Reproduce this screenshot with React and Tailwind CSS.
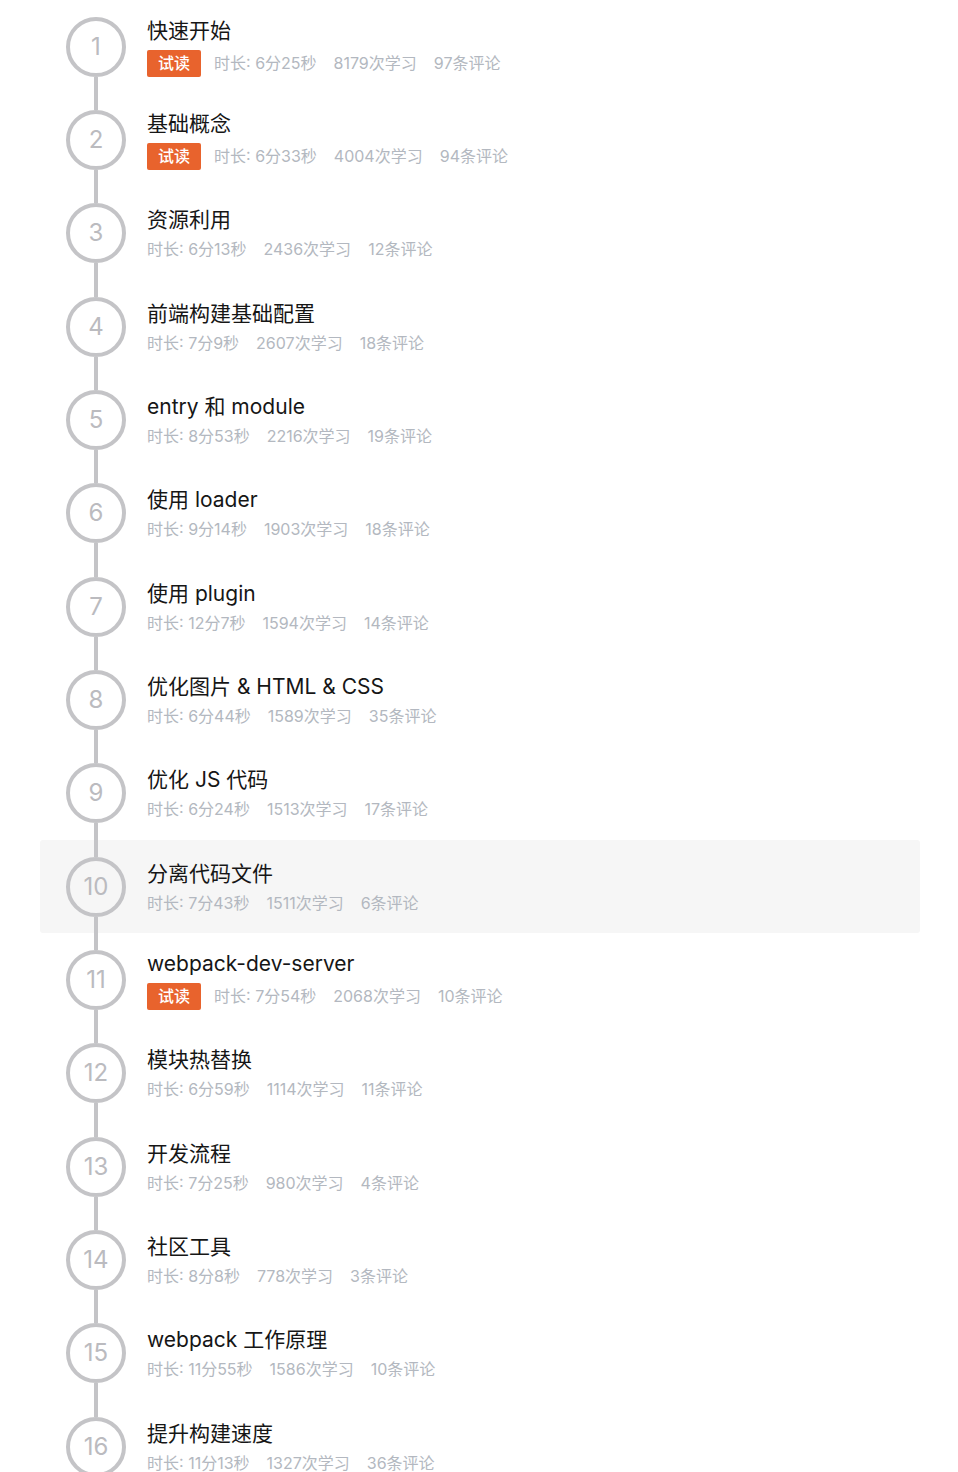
import React from "react";

const items = [
  ["快速开始", true, "6分25秒", "8179", "97"],
  ["基础概念", true, "6分33秒", "4004", "94"],
  ["资源利用", false, "6分13秒", "2436", "12"],
  ["前端构建基础配置", false, "7分9秒", "2607", "18"],
  ["entry 和 module", false, "8分53秒", "2216", "19"],
  ["使用 loader", false, "9分14秒", "1903", "18"],
  ["使用 plugin", false, "12分7秒", "1594", "14"],
  ["优化图片 & HTML & CSS", false, "6分44秒", "1589", "35"],
  ["优化 JS 代码", false, "6分24秒", "1513", "17"],
  ["分离代码文件", false, "7分43秒", "1511", "6"],
  ["webpack-dev-server", true, "7分54秒", "2068", "10"],
  ["模块热替换", false, "6分59秒", "1114", "11"],
  ["开发流程", false, "7分25秒", "980", "4"],
  ["社区工具", false, "8分8秒", "778", "3"],
  ["webpack 工作原理", false, "11分55秒", "1586", "10"],
  ["提升构建速度", false, "11分13秒", "1327", "36"],
];

const font = {
  fontFamily: '"Inter", "Noto Sans CJK SC", sans-serif',
};

export default function App() {
  return (
    <div className="w-[958px] bg-white px-[40px] overflow-hidden" style={font}>
      {items.map(([title, trial, dur, learn, comments], i) => (
        <div
          key={i}
          className={`flex h-[93.333px] w-[880px] items-stretch rounded-[3px] pl-[26px] ${
            i === 9 ? "bg-[#f6f6f6]" : ""
          }`}
        >
          <div className="flex w-[60px] shrink-0 flex-col items-center">
            <div className={`w-[4px] flex-1 ${i === 0 ? "" : "bg-[#c4c4c7]"}`} />
            <div className="flex h-[60px] w-[60px] items-center justify-center rounded-full border-[4px] border-[#c4c4c7] text-[24px] text-[#bbbbbf]">
              {i + 1}
            </div>
            <div className="w-[4px] flex-1 bg-[#c4c4c7]" />
          </div>
          <div className="ml-[21px] flex flex-col justify-center">
            <div className="h-[33px] text-[21px] leading-[33px] text-[#161616]">{title}</div>
            <div className="flex items-center text-[16px] leading-[27px] text-[#b3b8c0]">
              {trial && (
                <span className="my-[3px] mr-[13px] flex h-[27px] w-[54px] items-center justify-center rounded-[2px] bg-[#e8632d] text-[16px] font-medium text-white">
                  试读
                </span>
              )}
              <span>时长: {dur}</span>
              <span className="ml-[17px]">{learn}次学习</span>
              <span className="ml-[17px]">{comments}条评论</span>
            </div>
          </div>
        </div>
      ))}
    </div>
  );
}
